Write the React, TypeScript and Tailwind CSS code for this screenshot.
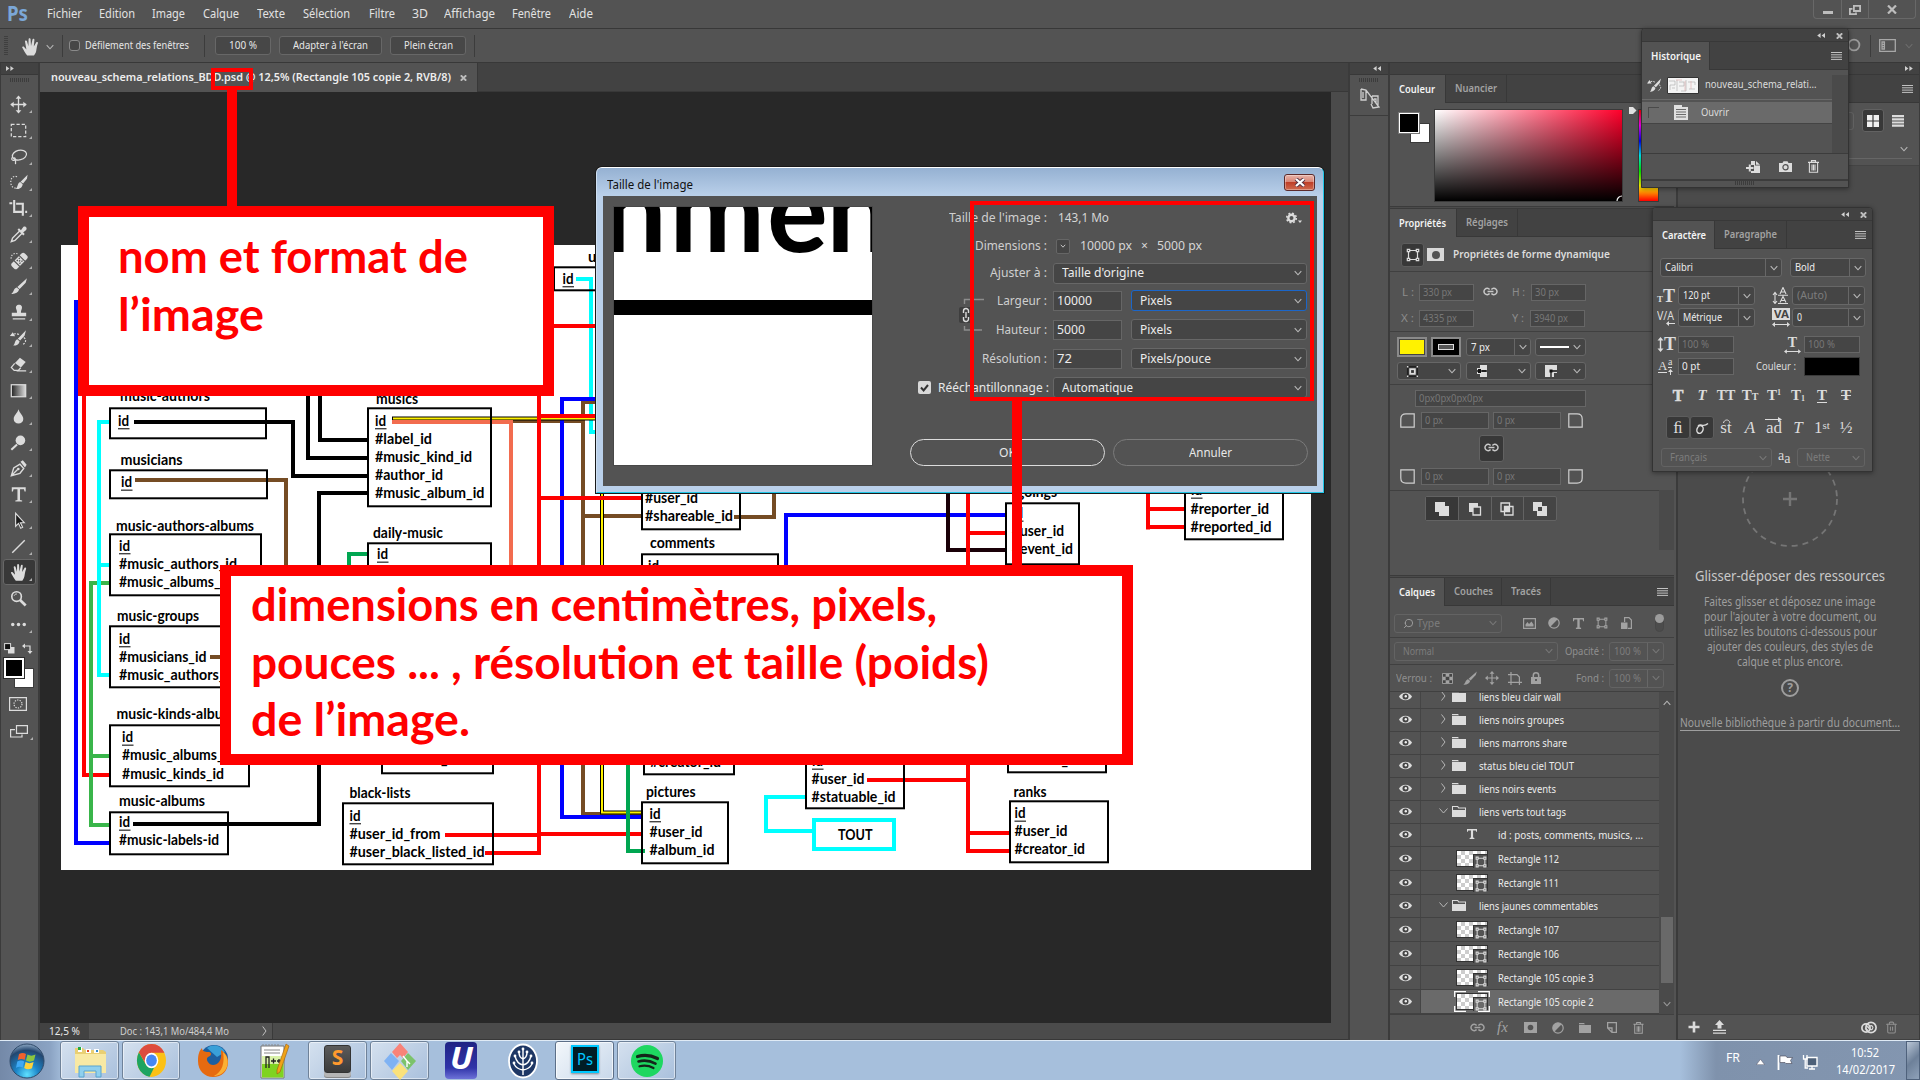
import React, { useLayoutEffect, useRef } from "react";
import { Search, Trash2 } from "lucide-react";

type Kids = { children?: React.ReactNode };

/* Text squeezed horizontally to a given width, like the narrow Adobe UI face. */
function Fit({ w, children, className = "" }: { w: number; className?: string } & Kids) {
  const ref = useRef<HTMLSpanElement>(null);
  useLayoutEffect(() => {
    const el = ref.current;
    if (!el) return;
    el.style.transform = "none";
    const n = el.getBoundingClientRect().width;
    if (n) el.style.transform = `scaleX(${w / n})`;
  }, [w, children]);
  return (
    <span className={"block shrink-0 whitespace-nowrap text-left " + className} style={{ width: w }}>
      <span ref={ref} className="inline-block origin-left whitespace-nowrap">
        {children}
      </span>
    </span>
  );
}

const Chev = ({ c = "#b4b4b4", up = false }: { c?: string; up?: boolean }) => (
  <svg className="shrink-0" width="8" height="6" viewBox="0 0 8 6" fill="none" stroke={c} strokeWidth="1.1">
    <path d={up ? "M0.7 4.8 L4 1.2 L7.3 4.8" : "M0.7 1.2 L4 4.8 L7.3 1.2"} />
  </svg>
);

const Burger = ({ className = "" }: { className?: string }) => (
  <svg className={"shrink-0 " + className} width="11" height="8" viewBox="0 0 11 8" stroke="#c2c2c2" strokeWidth="1">
    <path d="M0 .5H11M0 2.8H11M0 5.1H11M0 7.4H11" />
  </svg>
);

const Dbl = ({ right = false, className = "" }: { right?: boolean; className?: string }) => (
  <svg className={"shrink-0 " + className} width="8" height="5" viewBox="0 0 8 5" fill="#d0d0d0">
    <path d={right ? "M0 0L3.4 2.5L0 5ZM4.4 0L7.8 2.5L4.4 5Z" : "M8 0L4.6 2.5L8 5ZM3.6 0L.2 2.5L3.6 5Z"} />
  </svg>
);

const CloseX = ({ className = "" }: { className?: string }) => (
  <svg className={"shrink-0 " + className} width="7" height="6" viewBox="0 0 7 6" stroke="#bdbdbd" strokeWidth="1.9">
    <path d="M.8 .3L6.2 5.7M6.2 .3L.8 5.7" />
  </svg>
);

const Link = ({ c = "#c8c8c8" }: { c?: string }) => (
  <svg className="shrink-0" width="15" height="9" viewBox="0 0 15 9" fill="none" stroke={c} strokeWidth="1.5">
    <path d="M6.6 6.6A3.2 3.2 0 1 1 6.6 2.4M8.4 2.4A3.2 3.2 0 1 1 8.4 6.6M4.5 4.5H10.5" />
  </svg>
);

const Grip = ({ className = "" }: { className?: string }) => (
  <svg className={className} width="20" height="4" viewBox="0 0 20 4" stroke="#3c3c3c" strokeWidth="1">
    <path d="M.5 0V4M2.5 0V4M4.5 0V4M6.5 0V4M8.5 0V4M10.5 0V4M12.5 0V4M14.5 0V4M16.5 0V4M18.5 0V4" />
  </svg>
);

const Nodes = ({ c = "#dcdcdc", s = 14 }: { c?: string; s?: number }) => (
  <svg className="shrink-0" width={s} height={s} viewBox="0 0 14 14" fill="none" stroke={c} strokeWidth="1.2">
    <path d="M3.5 2.5H10.5M3.5 11.5H10.5M2.5 3.5V10.5M11.5 3.5V10.5" />
    <path d="M1.3 1.3H3.7V3.7H1.3ZM10.3 1.3H12.7V3.7H10.3ZM1.3 10.3H3.7V12.7H1.3ZM10.3 10.3H12.7V12.7H10.3Z" />
  </svg>
);

function Sel({ w, h = "h-[18px]", text, tw, div = false, dim = false, flat = false, className = "", pl = "pl-[5px]", icon }: {
  w: number; h?: string; text?: string; tw?: number; div?: boolean; dim?: boolean; flat?: boolean; className?: string; pl?: string; icon?: React.ReactNode;
}) {
  return (
    <div
      className={`flex shrink-0 items-center justify-between rounded-[3px] border ${h} ${flat ? "border-[#636363] bg-[#535353]" : "border-[#676767] bg-[#454545]"} ${className}`}
      style={{ width: w }}
    >
      <div className={`flex items-center ${pl}`}>
        {icon}
        {text && <Fit w={tw || 20} className={dim ? "text-[#7d7d7d]" : "text-[#ececec]"}>{text}</Fit>}
      </div>
      <div className={`flex h-full w-[16px] shrink-0 items-center justify-center ${div ? "border-l border-[#676767]" : ""}`}>
        <Chev c={flat ? "#777777" : "#b9b9b9"} />
      </div>
    </div>
  );
}

const Inp = ({ w, text, tw, lit = false, className = "", h = "h-[17px]" }: { w: number; text: string; tw: number; lit?: boolean; className?: string; h?: string }) => (
  <div className={`flex shrink-0 items-center border border-[#666666] bg-[#454545] pl-[3px] ${h} ${className}`} style={{ width: w }}>
    <Fit w={tw} className={lit ? "text-[#ececec]" : "text-[#777777]"}>{text}</Fit>
  </div>
);

function Tabs({ items, menu = true }: { items: [string, number, number][]; menu?: boolean }) {
  return (
    <div className="flex h-[28px] shrink-0 items-stretch bg-[#424242]">
      {items.map(([t, w, tw], i) => (
        <div
          key={t}
          className={`flex shrink-0 items-center border-r border-[#383838] pl-[9px] font-semibold ${i === 0 ? "bg-[#535353] text-[#f4f4f4]" : "border-b text-[#a3a3a3]"}`}
          style={{ width: w }}
        >
          <Fit w={tw}>{t}</Fit>
        </div>
      ))}
      <div className="flex flex-1 items-center justify-end border-b border-[#383838] pr-[6px]">{menu && <Burger />}</div>
    </div>
  );
}

/* ---------- Top bars ---------- */

const MENU: [string, number, number][] = [
  ["Fichier", 47, 35], ["Edition", 99, 36], ["Image", 152, 33], ["Calque", 203, 36], ["Texte", 257, 28], ["Sélection", 303, 47],
  ["Filtre", 369, 26], ["3D", 412, 16], ["Affichage", 444, 51], ["Fenêtre", 512, 39], ["Aide", 569, 24],
];

function MenuBar() {
  return (
    <div className="flex h-[29px] shrink-0 items-start border-b border-[#383838] bg-[#535353]">
      <div className="flex h-[27px] w-[47px] items-center pl-[7px] text-[21px] font-bold text-[#7ba7d7]">
        <Fit w={21}>Ps</Fit>
      </div>
      {MENU.map(([t, x, w], i) => (
        <div key={t} className="flex h-[28px] shrink-0 items-center text-[12.5px] text-[#e2e2e2]" style={{ width: (MENU[i + 1]?.[1] ?? x + 60) - x }}>
          <Fit w={w}>{t}</Fit>
        </div>
      ))}
      <div className="ml-auto mr-[4px] flex h-[19px] w-[103px] rounded-b-[4px] border border-t-0 border-[#686868]">
        <div className="flex w-[28px] items-center justify-center border-r border-[#686868]">
          <div className="mt-[6px] h-[3px] w-[10px] bg-[#bdbdbd]" />
        </div>
        <div className="flex w-[27px] items-center justify-center border-r border-[#686868]">
          <svg className="mt-[2px]" width="12" height="10" viewBox="0 0 12 10" fill="none" stroke="#bdbdbd" strokeWidth="1.8">
            <path d="M4.9 .9H11.1V6H4.9ZM3.5 3.9H.9V9.1H7V7.5" />
          </svg>
        </div>
        <div className="flex flex-1 items-center justify-center">
          <svg width="10" height="9" viewBox="0 0 10 9" stroke="#bdbdbd" strokeWidth="2.2"><path d="M1 .5L9 8.5M9 .5L1 8.5" /></svg>
        </div>
      </div>
    </div>
  );
}

const HandShape = () => (
  <path
    fill="#dcdcdc"
    d="M7.2 21.5C5.4 19.4 3.6 16 2.3 13.8C1.8 12.8 3.2 12 4.1 12.9L6.4 15.4L5 7.6C4.8 6.3 6.7 6 7 7.3L8.4 12.2L8.6 5.2C8.6 3.9 10.5 3.9 10.6 5.2L11 12L12.5 5.6C12.8 4.3 14.6 4.7 14.4 6L13.8 12.6L16.2 8.4C16.8 7.3 18.4 8.1 17.9 9.3C16.8 12 16.7 14.5 16.2 17C15.8 19 14.8 20.4 14 21.5Z"
  />
);

function OptionsBar() {
  const btn = "flex h-[19px] shrink-0 items-center justify-center rounded-[3px] border border-[#676767] bg-[#474747]";
  return (
    <div className="flex h-[34px] shrink-0 items-center border-b border-[#383838] bg-[#535353] text-[11px] text-[#e6e6e6]">
      <svg className="ml-[4px]" width="4" height="20" viewBox="0 0 4 20" stroke="#3f3f3f"><path d="M0 .5H4M0 2.5H4M0 4.5H4M0 6.5H4M0 8.5H4M0 10.5H4M0 12.5H4M0 14.5H4M0 16.5H4M0 18.5H4" /></svg>
      <svg className="ml-[12px]" width="21" height="24" viewBox="0 0 21 24"><HandShape /></svg>
      <div className="ml-[5px] mt-[3px]"><Chev /></div>
      <div className="ml-[8px] h-[22px] w-px bg-[#3c3c3c]" />
      <div className="ml-[6px] h-[11px] w-[11px] rounded-[3px] border border-[#8a8a8a] bg-[#464646]" />
      <Fit w={104} className="ml-[5px]">Défilement des fenêtres</Fit>
      <div className="ml-[15px] h-[22px] w-px bg-[#3c3c3c]" />
      <div className={btn + " ml-[10px] w-[56px]"}><Fit w={28}>100 %</Fit></div>
      <div className={btn + " ml-[8px] w-[103px]"}><Fit w={75}>Adapter à l'écran</Fit></div>
      <div className={btn + " ml-[8px] w-[76px]"}><Fit w={49}>Plein écran</Fit></div>
      <div className="ml-[8px] h-[22px] w-px bg-[#3c3c3c]" />
      <div className="ml-auto flex items-center">
        <svg width="16" height="16" viewBox="0 0 16 16" fill="none" stroke="#9a9a9a" strokeWidth="1.8"><circle cx="8" cy="7" r="5.4" /></svg>
        <div className="ml-[8px] h-[22px] w-px bg-[#3c3c3c]" />
        <svg className="ml-[8px]" width="17" height="13" viewBox="0 0 17 13" fill="none" stroke="#a8a8a8" strokeWidth="1.3">
          <path d="M.7 .7H16.3V12.3H.7ZM3 3H5.4V10H3ZM3 5.3H5.4M3 7.6H5.4" />
        </svg>
        <div className="ml-[9px] mr-[7px]"><Chev c="#6c6c6c" /></div>
      </div>
    </div>
  );
}

/* ---------- Toolbar ---------- */

const L = "#dcdcdc";
const TOOLS: React.ReactNode[] = [
  <g fill="none" stroke={L} strokeWidth="1.4"><path d="M12 4V20M4 12H20" /><path fill={L} stroke="none" d="M12 2.5L15 6H9ZM12 21.5L15 18H9ZM3.5 12L7 9V15ZM20.5 12L17 9V15Z" /></g>,
  <path d="M4.5 5.5H19.5V18.5H4.5Z" fill="none" stroke={L} strokeWidth="1.3" strokeDasharray="3.4 2" />,
  <g fill="none" stroke={L} strokeWidth="1.3"><ellipse cx="13" cy="10.5" rx="7.5" ry="5" transform="rotate(-14 13 10.5)" /><path d="M6 12.5C4 14 5 16.5 7.3 16C9.5 15.4 8.7 13 6.7 13.4M8.5 15.5C9.5 17 8.5 18.5 9 20" /></g>,
  <g><path d="M10.5 6C6 4.5 3.5 8 4 12.5C4.5 17 7.5 18.5 10.5 17.5" fill="none" stroke={L} strokeWidth="1.3" strokeDasharray="1.4 1.6" /><path fill={L} d="M21.5 4L20.8 8L16.8 13L14.2 11.1ZM13.8 11.6L16.4 13.8C15.7 17.7 13 19 9 18.9C11.6 17 10.6 12.8 13.8 11.6Z" /></g>,
  <path d="M7.5 3V15.5H16.5M2.5 6.5H5.5M9.5 7H16.5V19.5M19 15.5H21" fill="none" stroke={L} strokeWidth="2.2" />,
  <g><path d="M13.5 8L5.8 15.7L4.5 19.5L8.3 18.2L16 10.5" fill="none" stroke={L} strokeWidth="1.5" /><path fill={L} d="M12.5 5.5L18.5 11.5L17 13L11 7ZM14.5 7.5L17 4.2C18.8 2.6 21.6 5 20 7.2L16.8 9.8Z" /></g>,
  <g><path d="M11 5C7 3.5 3.5 6.5 4.5 11" fill="none" stroke={L} strokeWidth="1.2" strokeDasharray="1.4 1.5" /><g transform="rotate(-45 13 12.5)"><rect x="3.5" y="8.5" width="19" height="8" rx="2.5" fill={L} /><path d="M9.2 8V17M16.8 8V17" stroke="#535353" strokeWidth="1.2" /><path d="M11 10.5H12.5M14 10.5H15.5M12.3 12.5H14M11 14.5H12.5M14 14.5H15.5" stroke="#444" strokeWidth="1.2" /></g></g>,
  <path fill={L} d="M20.8 3.5L19.5 8L13.2 14.5L10.8 12.4ZM10.2 13L12.7 15.2C11.5 18.7 8.5 20 4.5 19.7C7.4 17.6 6.8 13.8 10.2 13Z" />,
  <path fill={L} d="M12.5 4C15 4 16.3 6 15.4 8.3C14.8 9.8 14.4 11 14.6 12.3H20V16H5V12.3H10.4C10.6 11 10.2 9.8 9.6 8.3C8.7 6 10 4 12.5 4ZM6 18H19V19.4H6Z" />,
  <g><path fill={L} d="M19.8 3.5L18.3 9L13.7 14.2L11.3 12.2ZM10.8 12.8L13.2 15C12.2 18.2 10 19.5 6.5 19.4C8.8 17.6 7.8 13.8 10.8 12.8Z" /><path d="M4.5 9C7 6.5 10 6.5 13 8.2M17.5 11C20.5 13 20 17 15.5 18.5" fill="none" stroke={L} strokeWidth="1.2" strokeDasharray="2 1.3" /><path fill={L} d="M3 9.5L8.5 9.7L6 5.5Z" /></g>,
  <g><path fill={L} d="M13.5 5L19.5 9.5L14.5 15.2L8.3 10.5Z" /><path d="M8 10.8L4.5 15L7.5 18.2H11.8L14.3 15.4M10 18.6H20" fill="none" stroke={L} strokeWidth="1.3" /></g>,
  <g><defs><linearGradient id="gt"><stop offset="0" stopColor="#222" /><stop offset="1" stopColor="#ddd" /></linearGradient></defs><rect x="4.5" y="6" width="15" height="12.5" fill="url(#gt)" stroke={L} strokeWidth="1.3" /></g>,
  <path fill={L} d="M12 4.5C13 8.5 17 11 17 14.5C17 17.5 14.8 19.2 12 19.2C9.2 19.2 7 17.5 7 14.5C7 11 11 8.5 12 4.5Z" />,
  <g><circle cx="14" cy="9.8" r="5" fill={L} /><path d="M10.5 14L4.5 19.5" stroke={L} strokeWidth="2.2" /></g>,
  <g><path d="M4.5 19.5L7 11.5L13.5 7.5L17.5 12L13.5 17ZM5 19L11 13" fill="none" stroke={L} strokeWidth="1.4" /><circle cx="11.8" cy="12.5" r="1.4" fill={L} /><path fill={L} d="M14 5L16.5 3.5L20.5 8L18.7 11Z" /></g>,
  <path fill={L} d="M5 4.5H19.5V8.8H18.3L17.7 6.5H13.6V17.8L15.8 18.2V19.4H8.7V18.2L10.9 17.8V6.5H6.8L6.2 8.8H5Z" />,
  <path d="M9 4.5V18L12 15L14.3 20L16.3 19L14 14.3H18Z" fill="#1c1c1c" stroke={L} strokeWidth="1.2" />,
  <path d="M5.5 18.5L18.5 5.5" stroke={L} strokeWidth="1.5" />,
  <g transform="translate(2 -1)"><HandShape /></g>,
  <g fill="none" stroke={L}><circle cx="10" cy="10" r="5" strokeWidth="1.7" /><path d="M13.6 13.6L19.5 19.3" strokeWidth="2.8" /><path d="M7.5 9C8 7.8 9 7.2 10.3 7.3" strokeWidth="1" /></g>,
  <g fill={L}><circle cx="6" cy="12" r="1.8" /><circle cx="12" cy="12" r="1.8" /><circle cx="18" cy="12" r="1.8" /></g>,
];

function Toolbar() {
  return (
    <div className="flex w-[40px] shrink-0 flex-col border-l border-r-2 border-[#3b3b3b] bg-[#535353]">
      <div className="flex h-[12px] shrink-0 items-center border-b border-[#383838] bg-[#424242] pl-[5px]"><Dbl right /></div>
      <div className="flex h-[16px] shrink-0 items-start justify-center pt-[3px]"><Grip /></div>
      {TOOLS.map((t, i) => (
        <div key={i} className={`flex h-[26px] shrink-0 items-center ${i === 18 ? "ml-[2px] mr-[2px] rounded-[3px] border border-[#676767] bg-[#383838]" : "pl-[2px]"}`}>
          <svg className={i === 18 ? "ml-[3px]" : "ml-[4px]"} width="23" height="23" viewBox="0 0 24 24">{t}</svg>
          <svg className="mt-[15px] -ml-px" width="3" height="3" viewBox="0 0 3 3"><path fill={i === 19 ? "none" : "#b0b0b0"} d="M3 0V3H0Z" /></svg>
        </div>
      ))}
      <div className="mt-[4px] flex h-[14px] items-center gap-[7px] pl-[3px]">
        <svg width="11" height="11" viewBox="0 0 11 11"><rect x="4" y="4" width="6.5" height="6.5" fill={L} /><rect x=".6" y=".6" width="6" height="6" fill="#111" stroke={L} /></svg>
        <svg width="11" height="11" viewBox="0 0 11 11" fill="none" stroke={L} strokeWidth="1.2"><path d="M2 3H8V9" /><path fill={L} stroke="none" d="M0 3L3 .5V5.5ZM8 11L5.5 8H10.5Z" /></svg>
      </div>
      <div className="relative mt-px ml-[3px] h-[34px] w-[30px] shrink-0">
        <div className="absolute left-[10px] top-[12px] h-[20px] w-[20px] border border-[#3c3c3c] bg-white" />
        <div className="absolute left-0 top-[2px] h-[20px] w-[20px] border-2 border-white bg-black outline outline-[#2b2b2b]" />
      </div>
      <svg className="mt-[7px] ml-[8px] shrink-0" width="18" height="14" viewBox="0 0 18 14" fill="none" stroke={L} strokeWidth="1.2"><path d="M.6 .6H17.4V13.4H.6Z" /><circle cx="9" cy="7" r="4" strokeDasharray="1.3 1.2" /></svg>
      <svg className="mt-[13px] ml-[9px] shrink-0" width="24" height="16" viewBox="0 0 24 16" fill="none" stroke={L} strokeWidth="1.2"><path d="M6.5 1.6H17.4V9.4H6.5ZM5 5.6H.6V13H12V10.5" /><path fill="#b0b0b0" stroke="none" d="M23 13V16H20Z" /></svg>
    </div>
  );
}

/* ---------- Document ---------- */

const BROWN = "#754c24";
const LINES: [string, string][] = [
  ["#0000ff", "M76 300V843H110"],
  ["#ff0000", "M84 390V775H110"],
  ["#39b54a", "M110 583H91V825H110M91 756H110"],
  ["#00ffff", "M110 422H99V675H110M99 565H110"],
  ["#00ffff", "M576 279H591V432H600"],
  [BROWN, "M600 402H583V814H641M583 516H641M513 421H583"],
  [BROWN, "M135 480H286V657H210"],
  [BROWN, "M734 517H774V480"],
  ["#0000ff", "M600 399H562V817H641"],
  ["#0000ff", "M786 580V515H1005"],
  ["#1a0008", "M948 480V550H1005"],
  ["#000000", "M134 422H293V476H367"],
  ["#000000", "M308 390V458H367"],
  ["#000000", "M320 390V440H367"],
  ["#000000", "M367 493H319V824H133"],
  ["#00a651", "M369 554H349V600"],
];
const TOP_LINES: [string, string][] = [
  ["#f26c4f", "M392 422H511V600"],
  ["#ff0000", "M539 390V853H485M445 835H539M539 834H641M539 416H600M539 498H641M550 326H600"],
  ["#ff0000", "M968 480V851H1009M968 533H1005M968 833H1009M867 780H968"],
  ["#ff0000", "M1148 480V529.5M1148 509H1184M1148 527H1184"],
  ["#00a651", "M628 750V851H645"],
  ["#00ffff", "M805 797H766V831H812"],
];
const BOXES: [number, number, number, number][] = [
  [110, 408, 266, 438], [110, 470, 267, 498], [110, 534, 261, 595], [110, 626, 261, 687], [110, 725, 249, 786], [110, 812, 228, 854],
  [368, 408, 491, 506], [368, 543, 491, 600], [382, 700, 493, 773], [343, 803, 493, 864], [554, 267, 640, 290],
  [642, 480, 740, 529], [642, 554, 778, 600], [1006, 503, 1079, 564], [1185, 480, 1283, 539], [644, 700, 734, 774],
  [642, 802, 728, 863], [806, 700, 904, 808], [1008, 700, 1106, 772], [1010, 801, 1108, 862],
];
const LABELS: [string, number, number, number][] = [
  ["music-authors", 120, 401, 90], ["id", 118, 425.5, 11], ["musicians", 120.5, 464.5, 62], ["id", 121, 487, 11],
  ["music-authors-albums", 116, 530.5, 138], ["id", 119, 550.5, 11], ["#music_authors_id", 119, 569, 118], ["#music_albums_id", 119, 587, 113],
  ["music-groups", 117, 621, 82], ["id", 119, 643.5, 11], ["#musicians_id", 119, 661.5, 87.5], ["#music_authors_id", 119, 679.5, 118],
  ["music-kinds-albums", 116.5, 719, 124], ["id", 122, 742, 11], ["#music_albums_id", 122, 760, 113], ["#music_kinds_id", 122, 778.5, 102],
  ["music-albums", 119, 805.5, 86], ["id", 119, 827, 11], ["#music-labels-id", 119, 845, 100],
  ["musics", 376, 403.5, 42], ["id", 375, 425.5, 11], ["#label_id", 375, 443.5, 57], ["#music_kind_id", 375, 461.5, 97], ["#author_id", 375, 479.5, 68], ["#music_album_id", 375, 497.5, 109.5],
  ["daily-music", 373, 537.5, 70], ["id", 377, 559, 11], ["#creator_id", 388, 764, 71],
  ["black-lists", 349.5, 798, 61], ["id", 349.5, 820.5, 11], ["#user_id_from", 349.5, 839, 91], ["#user_black_listed_id", 349.5, 857, 135],
  ["users", 588, 262, 35], ["id", 562.5, 283.5, 11],
  ["#user_id", 645, 502.5, 53], ["#shareable_id", 645, 520.5, 88], ["comments", 650, 547.5, 65], ["id", 648, 571, 11],
  ["goings", 1017, 496.5, 40], ["id", 1012, 518, 11], ["#user_id", 1012, 536, 52], ["#event_id", 1012, 554, 61],
  ["id", 1191, 495, 11], ["#reporter_id", 1190.5, 513.5, 78.5], ["#reported_id", 1190.5, 531.5, 81],
  ["#creator_id", 650, 767, 71], ["pictures", 646, 797, 49.5], ["id", 649.5, 818.5, 11], ["#user_id", 649.5, 837, 53], ["#album_id", 649.5, 855, 65],
  ["id", 812, 766, 11], ["#user_id", 811.5, 784, 53], ["#statuable_id", 811.5, 802, 84], ["TOUT", 838, 839.5, 34.5],
  ["#status_id", 1015.5, 765, 64], ["ranks", 1013.5, 796.5, 33], ["id", 1014.5, 818, 11], ["#user_id", 1014.5, 836, 53], ["#creator_id", 1014.5, 854, 70.5],
];

function Schema() {
  return (
    <svg className="block" width="1250" height="625" viewBox="61 245 1250 625" fill="none" fontFamily="Lato, Carlito, sans-serif">
      <rect x="61" y="245" width="1250" height="625" fill="#fff" />
      {LINES.map(([c, d], i) => <path key={i} d={d} stroke={c} strokeWidth="4" />)}
      <path d="M392 418.5H597M602 480V812.5H642" stroke="#000" strokeWidth="4" />
      <path d="M393 418.5H597M602 480V812.5H642" stroke="#fff200" strokeWidth="2" />
      {TOP_LINES.map(([c, d], i) => <path key={i} d={d} stroke={c} strokeWidth="4" />)}
      {BOXES.map(([a, b, c, d], i) => <rect key={i} x={a} y={b + 0.3} width={c - a} height={d - b} stroke="#000" strokeWidth="2" />)}
      <rect x="814" y="820" width="80" height="29" stroke="#00ffff" strokeWidth="4" />
      {LABELS.map(([t, x, y, w], i) => (
        <g key={i}>
          <text x={x} y={y} textLength={w} lengthAdjust="spacingAndGlyphs" fontSize="15" fontWeight="700" fill="#000">{t}</text>
          {t === "id" && <rect x={x} y={y + 2.5} width="11.5" height="1.4" fill="#444" />}
        </g>
      ))}
    </svg>
  );
}

function Document() {
  return (
    <div className="flex w-[1308px] shrink-0 flex-col bg-[#4b4b4b]">
      <div className="flex h-[29px] shrink-0 bg-[#424242]">
        <div className="flex w-[438px] items-center border-r border-[#383838] bg-[#535353] pl-[11px] text-[11px] font-semibold text-[#ededed]">
          <Fit w={400}>nouveau_schema_relations_BDD.psd @ 12,5% (Rectangle 105 copie 2, RVB/8)</Fit>
          <CloseX className="ml-[9px]" />
        </div>
        <div className="flex-1 border-b border-[#383838]" />
      </div>
      <div className="h-[931px] w-[1291px] shrink-0 overflow-hidden bg-[#282828] pl-[21px] pt-[153px]"><Schema /></div>
      <div className="flex h-[17px] shrink-0 items-center border-b border-[#383838] bg-[#4b4b4b] text-[11px] text-[#e8e8e8]">
        <div className="flex h-full w-[49px] items-center bg-[#424242] pl-[9px]"><Fit w={31}>12,5 %</Fit></div>
        <div className="flex h-full w-[184px] items-center border-r border-[#3a3a3a] bg-[#535353] pl-[31px] text-[#cfcfcf]">
          <Fit w={109}>Doc : 143,1 Mo/484,4 Mo</Fit>
          <svg className="ml-[33px]" width="5" height="10" viewBox="0 0 5 10" fill="none" stroke="#c0c0c0"><path d="M.7 .5L4 5L.7 9.5" /></svg>
        </div>
      </div>
    </div>
  );
}

/* ---------- Docked panels ---------- */

function ColorPanel() {
  return (
    <div className="flex h-[131px] shrink-0 flex-col">
      <Tabs items={[["Couleur", 56, 36], ["Nuancier", 61, 42]]} />
      <div className="flex pl-[9px] pt-[6px]">
        <div className="relative mt-[2px] h-[32px] w-[30px] shrink-0">
          <div className="absolute left-[11px] top-[12px] h-[20px] w-[20px] border border-[#3a3a3a] bg-white" />
          <div className="absolute left-0 top-[2px] h-[20px] w-[20px] border border-white bg-black outline outline-[#777777]" />
        </div>
        <div className="ml-[5px] h-[93px] w-[189px] overflow-hidden border border-[#3a3a3a] bg-[linear-gradient(to_right,#ffffff,#ff002b)]">
          <div className="flex h-full w-full items-end justify-end bg-[linear-gradient(to_bottom,rgba(0,0,0,0),#000000)]">
            <svg width="6" height="6" viewBox="0 0 6 6" fill="none" stroke="#eee" strokeWidth="1.2"><circle cx="6" cy="6" r="5" /></svg>
          </div>
        </div>
        <svg className="ml-[5px] -mt-[3px]" width="9" height="9" viewBox="0 0 9 9" fill="#e0e0e0"><path d="M1 1H5L8.5 4.5L5 8H1Z" /></svg>
        <div className="ml-px h-[93px] w-[21px] border border-[#3a3a3a] bg-[linear-gradient(to_bottom,#f00_0%,#f0f_17%,#00f_34%,#0ff_50%,#0f0_67%,#ff0_83%,#f00_100%)]" />
      </div>
    </div>
  );
}

const Corner = ({ rot }: { rot: number }) => (
  <svg className="shrink-0" width="15" height="15" viewBox="0 0 15 15" fill="none" stroke="#d0d0d0" strokeWidth="1.2">
    <path transform={`rotate(${rot} 7.5 7.5)`} d="M.8 14.2V6C.8 2.5 2.5 .8 6 .8H14.2V14.2Z" />
  </svg>
);

function PropertiesPanel() {
  const sec = "border-t border-[#404040]";
  return (
    <div className="flex h-[366px] shrink-0 flex-col text-[11px] text-[#8c8c8c]">
      <Tabs menu={false} items={[["Propriétés", 67, 47], ["Réglages", 61, 42]]} />
      <div className="flex h-[34px] items-center pl-[11px] pt-px">
        <div className="flex h-[24px] w-[23px] items-center justify-center rounded-[3px] border border-[#5d5d5d] bg-[#383838]"><Nodes /></div>
        <div className="ml-[3px] flex h-[13px] w-[17px] items-center justify-center bg-[#d8d8d8]"><div className="h-[8px] w-[8px] rounded-full bg-[#535353]" /></div>
        <Fit w={157} className="ml-[9px] font-semibold text-[#dcdcdc]">Propriétés de forme dynamique</Fit>
      </div>
      <div className={sec + " flex h-[60px] flex-col gap-[9px] pt-[12px]"}>
        <div className="flex items-center">
          <Fit w={12} className="ml-[12px]">L :</Fit><Inp w={55} tw={29} text="330 px" className="ml-[5px]" />
          <div className="ml-[9px] mb-[3px]"><Link /></div>
          <Fit w={13} className="ml-[14px]">H :</Fit><Inp w={55} tw={24} text="30 px" className="ml-[6px]" />
        </div>
        <div className="flex items-center">
          <Fit w={13} className="ml-[11px]">X :</Fit><Inp w={55} tw={34} text="4335 px" className="ml-[5px]" />
          <Fit w={12} className="ml-[38px]">Y :</Fit><Inp w={55} tw={34} text="3940 px" className="ml-[6px]" />
        </div>
      </div>
      <div className={sec + " flex h-[53px] flex-col gap-[5px] pl-[7px] pt-[5px]"}>
        <div className="flex items-center">
          <div className="h-[20px] w-[30px] border-2 border-[#8a8a8a] bg-[#fff200] outline outline-1 -outline-offset-3 outline-[#444]" />
          <div className="ml-[4px] flex h-[20px] w-[30px] items-center justify-center border-2 border-[#8a8a8a] bg-black"><div className="h-[6px] w-[16px] border border-[#ddd] bg-[#555]" /></div>
          <Sel w={65} text="7 px" tw={19} div className="ml-[5px]" pl="pl-[4px]" />
          <Sel w={51} className="ml-[4px]" pl="pl-[4px]" icon={<div className="h-[2px] w-[29px] bg-white" />} />
        </div>
        <div className="flex items-center">
          <Sel w={64} pl="pl-[8px]" icon={<svg width="13" height="13" viewBox="0 0 14 14" fill="none"><rect x="1.5" y="1.5" width="11" height="11" fill="#333" stroke="#1c1c1c" /><rect x="4.5" y="4.5" width="5" height="5" stroke="#ddd" strokeWidth="2" /><path d="M1 1H2.6V2.6H1ZM11.4 1H13V2.6H11.4ZM1 11.4H2.6V13H1ZM11.4 11.4H13V13H11.4Z" fill="#ddd" /></svg>} />
          <Sel w={65} className="ml-[5px]" pl="pl-[10px]" icon={<svg width="10" height="12" viewBox="0 0 10 12"><path fill="#ddd" d="M3 0H10V5H5V7H10V12H3V9H0V3H3Z" /><path d="M0 6H9" stroke="#111" strokeWidth="1.4" /><rect x="1" y="4" width="3" height="4" fill="#111" /></svg>} />
          <Sel w={51} className="ml-[4px]" pl="pl-[9px]" icon={<svg width="12" height="12" viewBox="0 0 12 12"><path fill="#ddd" d="M0 0H12V8H9V12H0Z" /><path d="M6 12V6H12" stroke="#111" fill="none" strokeWidth="1.3" /><rect x="4.5" y="4.5" width="3" height="3" fill="#111" /></svg>} />
        </div>
      </div>
      <div className={sec + " h-[106px] pt-[5px]"}>
        <Inp w={171} tw={64} text="0px0px0px0px" className="ml-[25px]" />
        <div className="mt-[5px] flex items-center pl-[10px]"><Corner rot={0} /><Inp w={68} tw={18} text="0 px" className="ml-[6px]" /><Inp w={68} tw={18} text="0 px" className="ml-[4px] mr-[7px]" /><Corner rot={90} /></div>
        <div className="ml-[89px] mt-[6px] flex h-[27px] w-[25px] items-center justify-center rounded-[3px] border border-[#626262] bg-[#383838]"><div className="mb-[2px]"><Link /></div></div>
        <div className="mt-[6px] flex items-center pl-[10px]"><Corner rot={270} /><Inp w={68} tw={18} text="0 px" className="ml-[6px]" /><Inp w={68} tw={18} text="0 px" className="ml-[4px] mr-[7px]" /><Corner rot={180} /></div>
      </div>
      <div className="flex flex-1">
        <div className={sec + " w-[269px] pl-[35px] pt-[5px]"}>
          <div className="flex h-[25px] w-[132px] divide-x divide-[#636363] rounded-[2px] border border-[#636363] bg-[#454545]">
            {[
              <path fill="#dcdcdc" d="M0 0H10V4H14V14H4V10H0Z" />,
              <g><path fill="#dcdcdc" d="M1 1H10V10H1Z" /><path fill="#454545" stroke="#dcdcdc" strokeWidth="1.3" d="M5 5H12.5V13H5Z" /></g>,
              <g stroke="#dcdcdc" strokeWidth="1.3" fill="none"><path d="M1 1H9.5V9.5H1ZM4.5 4.5H13V13H4.5Z" /><path fill="#dcdcdc" d="M5 5H9V9H5Z" /></g>,
              <path fill="#dcdcdc" fillRule="evenodd" d="M0 0H9V4H14V14H4V9H0ZM5 5H9V9H5Z" />,
            ].map((g, i) => (
              <div key={i} className={`flex flex-1 items-center justify-center ${i === 0 ? "bg-[#383838]" : ""}`}><svg width="14" height="14" viewBox="0 0 14 14">{g}</svg></div>
            ))}
          </div>
        </div>
        <div className="h-[60px] flex-1 bg-[#4a4a4a]" />
      </div>
    </div>
  );
}

const Eye = () => (
  <svg width="13" height="9" viewBox="0 0 13 9"><path fill="#dcdcdc" d="M0 4.5C2.5 -.6 10.5 -.6 13 4.5C10.5 9.6 2.5 9.6 0 4.5Z" /><circle cx="6.5" cy="4.5" r="3" fill="#444" /><circle cx="6.8" cy="4.2" r="1.2" fill="#eee" /></svg>
);

const LAYERS: { t: string; w: number; k: "f" | "o" | "t" | "r"; sel?: boolean }[] = [
  { t: "liens bleu clair wall", w: 82, k: "f" }, { t: "liens noirs groupes", w: 85, k: "f" }, { t: "liens marrons share", w: 88, k: "f" },
  { t: "status bleu ciel TOUT", w: 95, k: "f" }, { t: "liens noirs events", w: 77, k: "f" }, { t: "liens verts tout tags", w: 87, k: "o" },
  { t: "id : posts, comments, musics, ...", w: 145, k: "t" }, { t: "Rectangle 112", w: 61, k: "r" }, { t: "Rectangle 111", w: 61, k: "r" },
  { t: "liens jaunes commentables", w: 119, k: "o" }, { t: "Rectangle 107", w: 61, k: "r" }, { t: "Rectangle 106", w: 61, k: "r" },
  { t: "Rectangle 105 copie 3", w: 95.5, k: "r" }, { t: "Rectangle 105 copie 2", w: 95.5, k: "r", sel: true },
];

function LayerRow({ t, w, k, sel }: (typeof LAYERS)[number]) {
  return (
    <div className={`flex shrink-0 border-b border-[#424242] ${k === "r" ? "h-[24px]" : "h-[23px]"}`}>
      <div className="flex w-[31px] shrink-0 items-center justify-center border-r border-[#454545] pb-px"><Eye /></div>
      <div className={`flex flex-1 items-center ${sel ? "bg-[#6a6a6a]" : ""}`}>
        {(k === "f" || k === "o") && (
          <>
            <svg className="mb-[2px] ml-[18px]" width="9" height="10" viewBox="0 0 9 10" fill="none" stroke="#b8b8b8"><path d={k === "f" ? "M2.5 .5L6 5L2.5 9.5" : "M.5 2.5L4.5 7L8.5 2.5"} /></svg>
            <svg className="mb-[2px] ml-[4px]" width="14" height="11" viewBox="0 0 14 11">
              {k === "f" ? <path fill="#dcdcdc" d="M0 0H6L7 1.2H0ZM0 2H14V11H0Z" /> : <path fill="#dcdcdc" fillRule="evenodd" d="M0 0H6L7 1.5H14V11H0ZM1 1V4H13V2.6H6.4L5.4 1Z" />}
            </svg>
            <Fit w={w} className="ml-[13px] mt-px">{t}</Fit>
          </>
        )}
        {k === "t" && (
          <>
            <svg className="mb-[2px] ml-[46px]" width="10" height="10" viewBox="0 0 14 14"><path fill="#dcdcdc" d="M0 0H14V4H12.8L12.3 2H8.5V12L10.3 12.5V14H3.7V12.5L5.5 12V2H1.7L1.2 4H0Z" /></svg>
            <Fit w={w} className="ml-[21px] mt-px">{t}</Fit>
          </>
        )}
        {k === "r" && (
          <>
            <div className="relative ml-[33px] flex h-[21px] w-[36px] items-center justify-center">
              {sel && <svg className="absolute left-0 top-0" width="36" height="21" viewBox="0 0 36 21" fill="none" stroke="#fff" strokeWidth="1.3"><path d="M.7 6V.7H12M24 .7H35.3V6M35.3 15V20.3H24M12 20.3H.7V15" /></svg>}
              <div className="flex h-[17px] w-[32px] border border-[#333] bg-[repeating-conic-gradient(#ccc_0_25%,#fff_0_50%)] bg-[length:8px_8px]">
                <div className={`ml-auto mt-[3px] flex h-[14px] w-[14px] items-end justify-center ${sel ? "bg-[#6a6a6a]" : "bg-[#535353]"} border-l border-t border-[#333]`}><Nodes s={12} /></div>
              </div>
            </div>
            <Fit w={w} className="ml-[8px] mt-px">{t}</Fit>
          </>
        )}
      </div>
    </div>
  );
}

const HalfCircle = ({ s = 12 }: { s?: number }) => (
  <svg className="shrink-0" width={s} height={s} viewBox="0 0 12 12"><circle cx="6" cy="6" r="5.2" fill="none" stroke="#a2a2a2" strokeWidth="1.2" /><path d="M2.3 9.7A5.2 5.2 0 0 1 9.7 2.3Z" fill="#a2a2a2" /></svg>
);

function LayersPanel() {
  const g = "#a2a2a2";
  return (
    <div className="flex h-[462px] shrink-0 flex-col text-[11px] text-[#8f8f8f]">
      <Tabs items={[["Calques", 55, 36], ["Couches", 57, 39], ["Tracés", 49, 30]]} />
      <div className="flex h-[31px] shrink-0 items-center pl-[4px] pt-[3px]">
        <Sel flat w={108} h="h-[19px]" text="Type" tw={23} dim pl="pl-[8px]" icon={<Search className="mr-[3px] -scale-x-100" size={11} color={g} />} />
        <svg className="ml-[21px]" width="13" height="11" viewBox="0 0 13 11"><path d="M.6 .6H12.4V10.4H.6Z" fill="none" stroke={g} strokeWidth="1.2" /><path fill={g} d="M2.5 8.5V6.5L4.5 4L6 6L8.5 3.5L10.5 6.5V8.5Z" /></svg>
        <div className="ml-[12px]"><HalfCircle /></div>
        <svg className="ml-[13px]" width="11" height="11" viewBox="0 0 14 14"><path fill={g} d="M0 0H14V4H12.8L12.3 2H8.5V12L10.3 12.5V14H3.7V12.5L5.5 12V2H1.7L1.2 4H0Z" /></svg>
        <div className="ml-[12px] h-[12px]"><Nodes s={12} c={g} /></div>
        <svg className="ml-[13px]" width="11" height="12" viewBox="0 0 11 12"><path d="M3.6 5V.6H8L10.4 3V11.4H7" fill="none" stroke={g} strokeWidth="1.2" /><path fill={g} d="M0 5.5H6.5V12H0Z" /></svg>
        <div className="ml-[23px] h-[18px] w-[9px] rounded-full border border-[#474747] bg-[#4c4c4c]"><div className="-ml-px -mt-px h-[9px] w-[9px] rounded-full bg-[#9c9c9c]" /></div>
      </div>
      <div className="flex h-[27px] shrink-0 items-center border-t border-[#404040] pl-[4px]">
        <Sel flat w={164} h="h-[19px]" text="Normal" tw={31} dim pl="pl-[8px]" />
        <Fit w={39} className="ml-[7px]">Opacité :</Fit>
        <Sel flat div w={55} h="h-[19px]" text="100 %" tw={27} dim pl="pl-[4px]" className="ml-[5px]" />
      </div>
      <div className="flex h-[28px] shrink-0 items-center border-y border-[#404040] pl-[6px]">
        <Fit w={36}>Verrou :</Fit>
        <svg className="ml-[10px]" width="11" height="11" viewBox="0 0 12 12"><path d="M.5 .5H11.5V11.5H.5Z" fill="#444" stroke={g} /><path fill={g} d="M4 1H8V4H4ZM1 4H4V8H1ZM8 4H11V8H8ZM4 8H8V11H4Z" /></svg>
        <svg className="ml-[10px]" width="14" height="14" viewBox="4 3 17 17"><path fill={g} d="M20.8 3.5L19.5 8L13.2 14.5L10.8 12.4ZM10.2 13L12.7 15.2C11.5 18.7 8.5 20 4.5 19.7C7.4 17.6 6.8 13.8 10.2 13Z" /></svg>
        <svg className="ml-[8px]" width="14" height="14" viewBox="2 2 20 20"><path d="M12 4V20M4 12H20" stroke={g} strokeWidth="1.6" /><path fill={g} d="M12 2L15.5 6H8.5ZM12 22L15.5 18H8.5ZM2 12L6 8.5V15.5ZM22 12L18 8.5V15.5Z" /></svg>
        <svg className="ml-[9px]" width="14" height="13" viewBox="0 0 14 13" fill="none" stroke={g} strokeWidth="1.2"><path d="M3 0V13M0 2.6H9L11.4 5V13M0 10.4H14" /></svg>
        <svg className="ml-[9px]" width="10" height="12" viewBox="0 0 10 12"><path fill={g} d="M0 5H10V12H0Z" /><path d="M2.3 5V3.5A2.7 2.7 0 0 1 7.7 3.5V5" fill="none" stroke={g} strokeWidth="1.5" /><circle cx="5" cy="8" r="1" fill="#444" /></svg>
        <Fit w={28} className="ml-[35px]">Fond :</Fit>
        <Sel flat div w={55} h="h-[19px]" text="100 %" tw={27} dim pl="pl-[4px]" className="ml-[5px]" />
      </div>
      <div className="flex h-[322px] shrink-0 overflow-hidden">
        <div className="-mt-[6px] flex w-[269px] flex-col text-[#ececec]">
          {LAYERS.map((l) => <LayerRow key={l.t} {...l} />)}
        </div>
        <div className="flex flex-1 flex-col items-center bg-[#4a4a4a] pt-[8px]">
          <Chev up />
          <div className="mt-[211px] h-[66px] w-[12px] bg-[#696969]" />
          <div className="mt-[18px]"><Chev c="#999" /></div>
        </div>
      </div>
      <div className="flex flex-1 items-center border-t border-[#404040] pl-[80px]">
        <Link c={g} />
        <span className="ml-[12px] w-[14px] font-[Liberation_Serif] text-[15px] italic leading-none text-[#a2a2a2]">fx</span>
        <svg className="ml-[13px]" width="13" height="11" viewBox="0 0 13 11"><path fill={g} d="M0 0H13V11H0Z" /><circle cx="6.5" cy="5.5" r="2.8" fill="#535353" /></svg>
        <div className="ml-[15px]"><HalfCircle /></div>
        <svg className="ml-[15px]" width="12" height="10" viewBox="0 0 12 10"><path fill={g} d="M0 0H5L6 1.2H0ZM0 2H12V10H0Z" /></svg>
        <svg className="ml-[16px]" width="10" height="11" viewBox="0 0 10 11"><path d="M.6 6V.6H9.4V10.4H5L.6 6H5V10.4" fill="none" stroke={g} strokeWidth="1.3" /></svg>
        <svg className="ml-[16px]" width="11" height="12" viewBox="0 0 11 13" fill="none" stroke={g} strokeWidth="1.1"><path d="M0 2.4H11M3.5 2V.6H7.5V2M1.4 2.5V12.3H9.6V2.5M4 4.5V10.5M5.5 4.5V10.5M7 4.5V10.5" /></svg>
      </div>
    </div>
  );
}

function Libraries() {
  return (
    <div className="flex w-[244px] shrink-0 flex-col border-l-2 border-r border-[#3b3b3b] bg-[#4b4b4b]">
      <div className="flex h-[12px] shrink-0 items-center justify-end border-b border-[#383838] bg-[#424242] pr-[6px]"><Dbl right /></div>
      <div className="flex h-[28px] shrink-0 items-center justify-end border-b border-[#383838] bg-[#424242] pr-[6px]"><Burger /></div>
      <div className="h-[63px] shrink-0 border-b border-[#444] bg-[#535353]">
        <div className="flex items-center justify-end pt-[6px]">
          <div className="h-[18px] w-[120px] rounded-[3px] border border-[#636363]" />
          <div className="ml-[8px] flex h-[23px] w-[22px] items-center justify-center rounded-[3px] border border-[#626262] bg-[#383838]">
            <svg width="12" height="12" viewBox="0 0 12 12" fill="#f0f0f0"><path d="M0 0H5.4V5.4H0ZM6.6 0H12V5.4H6.6ZM0 6.6H5.4V12H0ZM6.6 6.6H12V12H6.6Z" /></svg>
          </div>
          <svg className="ml-[8px] mr-[15px]" width="12" height="12" viewBox="0 0 12 12" fill="#dcdcdc"><path d="M0 0H12V2.2H0ZM0 3.2H12V5.4H0ZM0 6.4H12V8.6H0ZM0 9.6H12V11.8H0Z" /></svg>
        </div>
        <div className="mr-[7px] mt-[10px] flex h-[17px] justify-end border-b border-[#666] pr-[4px] pt-[4px]"><Chev /></div>
      </div>
      <div className="flex flex-1 flex-col items-center pr-[17px] text-[12.5px] text-[#9e9e9e]">
        <svg className="mt-[284px] shrink-0" width="98" height="98" viewBox="0 0 98 98" fill="none" stroke="#757575"><circle cx="49" cy="49" r="47" strokeWidth="1.8" strokeDasharray="6 5" /><path d="M49 42V56M42 49H56" strokeWidth="2.4" /></svg>
        <Fit w={190} className="mt-[17px] text-[14px] text-[#c9c9c9]">Glisser-déposer des ressources</Fit>
        <div className="mt-[8px] flex flex-col items-center leading-[15px]">
          <Fit w={171.5}>Faites glisser et déposez une image</Fit>
          <Fit w={172.5}>pour l'ajouter à votre document, ou</Fit>
          <Fit w={173}>utilisez les boutons ci-dessous pour</Fit>
          <Fit w={166}>ajouter des couleurs, des styles de</Fit>
          <Fit w={106}>calque et plus encore.</Fit>
        </div>
        <div className="mt-[10px] flex h-[18px] w-[18px] items-center justify-center rounded-full border-2 border-[#9e9e9e] text-[12px] font-bold leading-none">?</div>
        <div className="mt-[19px] border-b border-[#9e9e9e] leading-[14px]"><Fit w={220}>Nouvelle bibliothèque à partir du document...</Fit></div>
      </div>
      <div className="flex h-[26px] shrink-0 items-center border-b border-t border-[#404040] bg-[#535353] pl-[10px]">
        <svg width="12" height="12" viewBox="0 0 12 12" stroke="#dcdcdc" strokeWidth="2.6"><path d="M6 .5V11.5M.5 6H11.5" /></svg>
        <svg className="ml-[13px]" width="13" height="14" viewBox="0 0 13 14" fill="#dcdcdc"><path d="M6.5 0L11 5H8.5V8.5H4.5V5H2ZM0 9.8H13V11H0ZM0 12.5H13V13.7H0Z" /></svg>
        <svg className="ml-[135px]" width="16" height="13" viewBox="0 0 16 13" fill="none" stroke="#dcdcdc"><circle cx="10" cy="6.5" r="5.1" strokeWidth="1.7" /><circle cx="5" cy="7" r="4.1" strokeWidth="1.7" /><path d="M4 7.5L7.5 9.5M6.8 7L9 5C11 3.8 12.8 6 11.4 8C10 9.4 8.5 8.4 7.8 7.2L5.6 5" strokeWidth="1.1" /></svg>
        <Trash2 className="ml-[8px]" size={13} color="#8f8f8f" />
      </div>
    </div>
  );
}

/* ---------- Floating panels ---------- */

function FloatHead() {
  return (
    <div className="flex h-[13px] shrink-0 items-center justify-end border-b border-[#383838] bg-[#424242] pr-[5px] pt-px">
      <Dbl /><CloseX className="ml-[11px]" />
    </div>
  );
}

function HistoryPanel() {
  return (
    <div className="absolute left-[1641px] top-[28px] flex h-[160px] w-[208px] flex-col overflow-hidden rounded-t-[4px] border border-[#333] bg-[#535353] text-[11px] text-[#dcdcdc] shadow-[0_1px_5px_rgba(0,0,0,0.4)]">
      <FloatHead />
      <Tabs items={[["Historique", 68, 50]]} />
      <div className="flex h-[84px] shrink-0 border-b border-[#3c3c3c]">
        <div className="w-[190px]">
          <div className="flex h-[30px] items-center border-b border-[#6a6a6a]">
            <svg className="ml-[5px] mt-[2px]" width="15" height="15" viewBox="3 3 18 18">{TOOLS[9]}</svg>
            <svg className="ml-[5px] mt-[2px]" width="32" height="17" viewBox="0 0 32 17"><path d="M.5 .5H31.5V16.5H.5Z" fill="#f4f4f4" stroke="#333" /><path d="M2 4H8V8H3V13M10 3V14M12 5H17V9H12M19 3V14H14M21 5H28V8M22 12H28M5 11H8" stroke="#aaa" strokeWidth=".6" fill="none" /><path d="M9 3H15M18 4V14M24 4V12" stroke="#daa" strokeWidth=".6" /></svg>
            <Fit w={111.5} className="ml-[6px]">nouveau_schema_relati...</Fit>
          </div>
          <div className="mt-[2px] flex h-[22px] items-center border-b border-[#444] bg-[#6a6a6a]">
            <div className="ml-[6px] h-[11px] w-[11px] border-l border-t border-[#4a4a4a]" />
            <svg className="ml-[15px]" width="14" height="15" viewBox="0 0 14 15"><path fill="#e0e0e0" d="M0 0H8V2H14V15H0Z" /><path d="M2 4.5H12M2 7H12M2 9.5H12M2 12H12" stroke="#6a6a6a" /></svg>
            <Fit w={28} className="mb-px ml-[13px]">Ouvrir</Fit>
          </div>
        </div>
        <div className="mt-[5px] flex-1 bg-[#4a4a4a]" />
      </div>
      <div className="flex h-[25px] shrink-0 items-center pl-[104px]">
        <svg width="14" height="12" viewBox="0 0 14 12"><path fill="#dcdcdc" d="M5 0H9V4.5H14V12H5V10H8V4H5ZM10 0L14 3.7H10Z" /><path d="M0 7H7.5M3.8 3.5V10.5" stroke="#dcdcdc" strokeWidth="2" /></svg>
        <svg className="ml-[19px]" width="13" height="11" viewBox="0 0 13 11"><path fill="#dcdcdc" d="M0 2H3.5L4.5 .3H8.5L9.5 2H13V11H0Z" /><circle cx="6.5" cy="6.2" r="2.6" fill="none" stroke="#535353" strokeWidth="1.2" /></svg>
        <svg className="ml-[16px]" width="11" height="13" viewBox="0 0 11 13" fill="none" stroke="#dcdcdc" strokeWidth="1.1"><path d="M0 2.4H11M3.5 2V.6H7.5V2M1.4 2.5V12.3H9.6V2.5M4 4.5V10.5M5.5 4.5V10.5M7 4.5V10.5" /></svg>
      </div>
      <div className="flex flex-1 justify-center border-t-2 border-[#3c3c3c]"><Grip /></div>
    </div>
  );
}

function CharacterPanel() {
  const serif = "flex w-[24px] shrink-0 items-center justify-center font-[Liberation_Serif] leading-none text-[#dcdcdc]";
  const ic = "shrink-0 whitespace-nowrap font-[Liberation_Serif] leading-none text-[#dcdcdc]";
  return (
    <div className="absolute left-[1652px] top-[207px] flex h-[265px] w-[221px] flex-col overflow-hidden rounded-t-[4px] border border-[#333] bg-[#535353] text-[11px] text-[#dcdcdc] shadow-[0_1px_5px_rgba(0,0,0,0.4)]">
      <FloatHead />
      <Tabs items={[["Caractère", 62, 44], ["Paragraphe", 72, 53]]} />
      <div className="mt-[9px] flex pl-[7px]">
        <Sel w={122} h="h-[19px]" div text="Calibri" tw={28} pl="pl-[4px]" />
        <Sel w={76} h="h-[19px]" div text="Bold" tw={20} pl="pl-[4px]" className="ml-[8px]" />
      </div>
      <div className="mt-[9px] flex items-center pl-[4px]">
        <div className={ic + " flex w-[21px] items-baseline font-bold"}><span className="text-[9px]">T</span><span className="text-[18px]">T</span></div>
        <Sel w={77} h="h-[19px]" div text="120 pt" tw={27} pl="pl-[4px]" />
        <svg className="ml-[17px]" width="17" height="17" viewBox="0 0 17 17" fill="none" stroke="#dcdcdc" strokeWidth="1.1"><path d="M3 6V16M1 8L3 5.5L5 8M1 14L3 16.5L5 14M6 8.2H16M6 16.5H16M8 7L11 .5L14 7M9 5H13M8 15.5L11 9.5L14 15.5M9 13.5H13" /></svg>
        <Sel w={73} h="h-[19px]" div text="(Auto)" tw={30} dim pl="pl-[4px]" className="ml-[3px]" />
      </div>
      <div className="mt-[3px] flex items-center pl-[4px]">
        <div className="relative h-[19px] w-[21px] shrink-0"><Fit w={17} className="text-[13px] leading-[14px]">V/A</Fit><svg className="absolute left-[9px] top-[13px]" width="9" height="5" viewBox="0 0 9 5" fill="#dcdcdc"><path d="M0 2.5L3 0V2H9V3H3V5Z" /></svg></div>
        <Sel w={77} h="h-[19px]" div text="Métrique" tw={39} pl="pl-[4px]" />
        <div className="ml-[17px] flex h-[19px] w-[18px] flex-col justify-between"><div className="flex h-[12px] justify-center bg-[#dcdcdc] text-[11px] font-bold leading-[12px] text-[#444]"><Fit w={15}>VA</Fit></div><svg width="18" height="5" viewBox="0 0 18 5" fill="#dcdcdc"><path d="M0 2.5L3 0V2H15V0L18 2.5L15 5V3H3V5Z" /></svg></div>
        <Sel w={73} h="h-[19px]" div text="0" tw={5} pl="pl-[4px]" className="ml-[2px]" />
      </div>
      <div className="mt-[8px] flex items-center pl-[4px]">
        <svg width="7" height="15" viewBox="0 0 7 15" fill="#dcdcdc"><path d="M3.5 0L6.5 3.5H4.2V11.5H6.5L3.5 15L.5 11.5H2.8V3.5H.5Z" /></svg>
        <span className={ic + " w-[14px] text-[18px] font-bold"}>T</span>
        <Inp w={56} tw={27} text="100 %" />
        <div className="ml-[50px] flex h-[17px] w-[17px] flex-col items-center"><span className={ic + " text-[14px] font-bold"}>T</span><svg className="-mt-px shrink-0" width="17" height="5" viewBox="0 0 18 5" fill="#dcdcdc"><path d="M0 2.5L3 0V2H15V0L18 2.5L15 5V3H3V5Z" /></svg></div>
        <Inp w={56} tw={27} text="100 %" className="ml-[3px]" />
      </div>
      <div className="mt-[4px] flex items-center pl-[5px]">
        <div className="relative h-[16px] w-[20px] shrink-0">
          <span className={ic + " block w-[9px] border-b border-[#dcdcdc] text-[13px]"}>A</span>
          <span className={ic + " absolute left-[10px] -top-[2px] border-b border-[#dcdcdc] text-[10px]"}>a</span>
          <svg className="absolute left-[10px] top-[10px]" width="5" height="6" viewBox="0 0 5 6" fill="#dcdcdc"><path d="M2.5 0L5 3H3V6H2V3H0Z" /></svg>
        </div>
        <Inp w={56} tw={18} text="0 pt" lit />
        <Fit w={40} className="ml-[22px]">Couleur :</Fit>
        <div className="ml-[8px] h-[19px] w-[56px] border border-[#3a3a3a] bg-black" />
      </div>
      <div className="mt-[11px] flex h-[17px] items-center pl-[13px] text-[15px] font-bold">
        <span className={serif + " text-[16px] [-webkit-text-stroke:0.6px_#dcdcdc]"}>T</span>
        <span className={serif + " italic"}>T</span>
        <span className={serif + " text-[14px]"}>TT</span>
        <span className={serif}>T<small className="mt-[3px] text-[10px]">T</small></span>
        <span className={serif}>T<small className="mb-[6px] text-[8px]">1</small></span>
        <span className={serif}>T<small className="mt-[7px] text-[8px]">1</small></span>
        <span className={serif + " underline underline-offset-2"}>T</span>
        <span className={serif + " line-through"}>T</span>
      </div>
      <div className="mt-[12px] flex h-[23px] items-center pl-[13px] text-[17px]">
        <span className={serif + " h-[23px] rounded-[3px] border border-[#5d5d5d] bg-[#383838]"}>ﬁ</span>
        <span className={serif + " h-[23px] rounded-[3px] border border-[#5d5d5d] bg-[#383838]"}>
          <svg width="14" height="12" viewBox="0 0 14 12" fill="none" stroke="#dcdcdc" strokeWidth="1.4"><ellipse cx="5" cy="7.5" rx="3" ry="4" transform="rotate(20 5 7.5)" /><path d="M3 4C6 1 8 6 13 1.5" /></svg>
        </span>
        <span className={serif}>
          <span className="relative">st<svg className="absolute left-[3px] top-0" width="8" height="4" viewBox="0 0 8 4" fill="none" stroke="#dcdcdc"><path d="M.5 4C1 .5 6 -.5 7 4" /></svg></span>
        </span>
        <span className={serif + " italic text-[#9a9a9a]"}>A</span>
        <span className={serif + " relative"}>ad<svg className="absolute left-[3px] -top-[2px]" width="17" height="5" viewBox="0 0 17 5" fill="#dcdcdc"><path d="M0 2H13V0L17 2.5L13 5V3H0Z" /></svg></span>
        <span className={serif + " italic text-[#9a9a9a]"}>T</span>
        <span className={serif}>1<small className="mb-[5px] text-[11px]">st</small></span>
        <span className={serif}>½</span>
      </div>
      <div className="mt-[9px] flex items-center pl-[8px]">
        <Sel flat w={111} h="h-[19px]" text="Français" tw={37} dim pl="pl-[8px]" />
        <span className={ic + " ml-[6px] w-[19px] text-[14px]"}><span className="relative -top-[2px]">a</span><span className="relative top-[1px]">a</span></span>
        <Sel flat w={68} h="h-[19px]" text="Nette" tw={24} dim pl="pl-[8px]" />
      </div>
    </div>
  );
}

/* ---------- Image size dialog ---------- */

const Label = ({ w, children }: { w: number; children: string }) => (
  <div className="flex w-[175px] shrink-0 justify-end text-[#cfcfcf]"><Fit w={w}>{children}</Fit></div>
);

function Dialog() {
  const row = "flex h-[29px] shrink-0 items-center";
  const unit = (t: string, w: number, focus = false) => (
    <Sel w={176} h="h-[21px]" text={t} tw={w} pl="pl-[8px]" className={"ml-[9px] " + (focus ? "border-[#1b66c9]!" : "")} />
  );
  return (
    <div className="absolute left-[596px] top-[167px] flex h-[326px] w-[728px] flex-col rounded-t-[6px] border border-t-white border-b-[#1fc7e8] border-l-[#cfe0f2] border-r-[#1fc7e8] bg-[#bad0ea] px-[6px] shadow-[0_0_0_1px_#1a1a1a]">
      <div className="-mx-[6px] flex h-[28px] shrink-0 items-center rounded-t-[5px] bg-[linear-gradient(to_bottom,#95b1d2,#bad0ea)] pl-[10px] pt-[5px] text-[12px] text-[#111]">
        <Fit w={86}>Taille de l'image</Fit>
        <div className="-mt-[4px] ml-auto mr-[8px] flex h-[17px] w-[31px] items-center justify-center rounded-[3px] border border-[#5c2a2a] bg-[linear-gradient(to_bottom,#e8b4aa,#d98676_45%,#bf3f28_50%,#cf6a4f)] shadow-[inset_0_0_0_1px_#ffffff55]">
          <svg width="12" height="9" viewBox="0 0 12 9"><path d="M2 1L10 8M10 1L2 8" stroke="#534" strokeWidth="4" /><path d="M2 1L10 8M10 1L2 8" stroke="#fff" strokeWidth="2.3" /></svg>
        </div>
      </div>
      <div className="flex h-[290px] shrink-0 bg-[#535353] text-[12px] text-[#e8e8e8]">
        <div className="relative ml-[11px] mt-[11px] h-[258px] w-[258px] shrink-0 overflow-hidden bg-white outline outline-[#484848]">
          <svg width="258" height="258" viewBox="0 0 258 258" fontFamily="Lato, sans-serif">
            <text x="-11.5 55.4 153 212.5" y="45" fontSize="114" fontWeight="700">nmen</text>
            <rect y="93" width="258" height="15" />
          </svg>
        </div>
        <div className="relative flex flex-1 flex-col pt-[7px]">
          <div className={row}><Label w={98}>Taille de l'image :</Label><Fit w={51} className="ml-[11px] text-[#d6d6d6]">143,1 Mo</Fit>
            <svg className="ml-[177px]" width="16" height="12" viewBox="0 0 16 12"><circle cx="5.5" cy="6" r="3.2" fill="none" stroke="#dcdcdc" strokeWidth="2.4" /><circle cx="5.5" cy="6" r="4.8" fill="none" stroke="#dcdcdc" strokeWidth="1.6" strokeDasharray="1.9 1.87" /><path fill="#dcdcdc" d="M12 8.5H16L14 11Z" /></svg>
          </div>
          <div className="flex h-[28px] shrink-0 items-center"><Label w={72}>Dimensions :</Label>
            <div className="ml-[9px] flex h-[15px] w-[14px] items-center justify-center rounded-[2px] border border-[#666] bg-[#454545]"><svg width="6" height="4" viewBox="0 0 8 6" fill="none" stroke="#ccc" strokeWidth="1.4"><path d="M.7 1.2L4 4.8L7.3 1.2" /></svg></div>
            <Fit w={52} className="ml-[10px] text-[#d6d6d6]">10000 px</Fit><Fit w={7} className="ml-[9px] text-[#d6d6d6]">×</Fit><Fit w={45} className="ml-[9px] text-[#d6d6d6]">5000 px</Fit>
          </div>
          <div className="flex h-[26px] shrink-0 items-center"><Label w={57}>Ajuster à :</Label><Sel w={254} h="h-[21px]" text="Taille d'origine" tw={82} pl="pl-[8px]" className="ml-[6px]" /></div>
          <div className={row}><Label w={50}>Largeur :</Label><Inp w={69} h="h-[20px]" lit tw={35} text="10000" className="ml-[6px]" />{unit("Pixels", 32, true)}</div>
          <div className={row}><Label w={51}>Hauteur :</Label><Inp w={69} h="h-[20px]" lit tw={28} text="5000" className="ml-[6px]" />{unit("Pixels", 32)}</div>
          <div className={row}><Label w={65}>Résolution :</Label><Inp w={69} h="h-[20px]" lit tw={15} text="72" className="ml-[6px]" />{unit("Pixels/pouce", 71)}</div>
          <div className={row}>
            <div className="ml-[46px] flex h-[13px] w-[13px] items-center justify-center rounded-[2px] bg-[#d8d8d8]"><svg width="9" height="8" viewBox="0 0 9 8" fill="none" stroke="#333" strokeWidth="2"><path d="M1 3.5L3.6 6.4L8 1" /></svg></div>
            <Fit w={111} className="ml-[7px]">Rééchantillonnage :</Fit>
            <Sel w={254} h="h-[21px]" text="Automatique" tw={71} pl="pl-[8px]" className="ml-[4px]" />
          </div>
          <div className="mt-[37px] flex pl-[38px]">
            <div className="flex h-[27px] w-[195px] items-center justify-center rounded-full border border-[#dcdcdc]"><Fit w={17}>OK</Fit></div>
            <div className="ml-[8px] flex h-[27px] w-[195px] items-center justify-center rounded-full border border-[#7b7b7b]"><Fit w={43}>Annuler</Fit></div>
          </div>
          <svg className="absolute left-[86px] top-[102px]" width="28" height="34" viewBox="0 0 28 34" fill="none" stroke="#8d8d8d" strokeWidth="1.4">
            <path d="M6.5 6V1.5H26M6.5 28V32H24" />
            <rect x="1" y="9" width="14" height="16" rx="2" fill="#3e3e3e" stroke="none" />
            <path d="M5.5 15V13A2.5 2.5 0 0 1 10.5 13V15M5.5 19V21A2.5 2.5 0 0 0 10.5 21V19M8 14V20" stroke="#dcdcdc" />
          </svg>
        </div>
      </div>
    </div>
  );
}

/* ---------- Annotations ---------- */

function Annotations() {
  return (
    <div className="font-[Lato] text-[46px] font-bold text-[#ff0000]">
      <div className="absolute left-[211px] top-[68px] h-[22px] w-[42px] border-4 border-[#ff0000]" />
      <div className="absolute left-[227px] top-[90px] h-[120px] w-[10px] bg-[#ff0000]" />
      <div className="absolute left-[78px] top-[206px] h-[190px] w-[476px] border-[11px] border-[#ff0000] bg-white pl-[29px] pt-[10px] leading-[58px]">
        <Fit w={350}>nom et format de</Fit>
        <Fit w={146}>l’image</Fit>
      </div>
      <div className="absolute left-[970px] top-[201px] h-[200px] w-[344px] border-4 border-[#ff0000]" />
      <div className="absolute left-[1012px] top-[400px] h-[170px] w-[10px] bg-[#ff0000]" />
      <div className="absolute left-[220px] top-[565px] h-[200px] w-[913px] border-[11px] border-[#ff0000] bg-white pl-[20px] leading-[57.5px]">
        <div className="-mt-px">
          <Fit w={686}>dimensions en centimètres, pixels,</Fit>
          <Fit w={738}>pouces ... , résolution et taille (poids)</Fit>
          <Fit w={219}>de l’image.</Fit>
        </div>
      </div>
    </div>
  );
}

/* ---------- Taskbar ---------- */

function TaskItem({ open = false, active = false, children, w = "w-[59px]" }: { open?: boolean; active?: boolean; w?: string } & Kids) {
  return (
    <div className={`flex h-[39px] shrink-0 items-center justify-center ${w} ${active ? "rounded-[3px] border border-[#5c6f88] bg-[linear-gradient(135deg,#f3f7fb,#c8d8ea)] shadow-[inset_0_0_0_1px_#ffffffaa]" : open ? "rounded-[3px] border border-[#6f8299] bg-[linear-gradient(135deg,#d5e1ef,#a9c0dc)] shadow-[inset_0_0_0_1px_#ffffff80]" : ""}`}>
      {children}
    </div>
  );
}

function Taskbar() {
  return (
    <div className="flex h-[40px] shrink-0 items-start border-t border-[#dfeaf5] bg-[linear-gradient(to_right,#7489a8_0px,#8ba3c3_50px,#a6bfdc_64px,#a6bfdc_1680px,#7f92ac_1716px,#8396b0_100%)] text-white">
      <div className="flex h-[39px] w-[60px] items-center pl-[9px]">
        <svg width="36" height="36" viewBox="0 0 36 36">
          <defs><radialGradient id="orb" cx=".5" cy=".9" r=".95"><stop offset="0" stopColor="#5fe0ff" /><stop offset=".35" stopColor="#1c86c9" /><stop offset=".75" stopColor="#23466f" /><stop offset="1" stopColor="#a9c2db" /></radialGradient></defs>
          <circle cx="18" cy="18" r="17" fill="url(#orb)" stroke="#2f4a6a" />
          <path fill="#f0622d" d="M10 11C13 9.3 15 9.8 17 11L15.6 17C13.5 15.8 11.5 15.8 8.8 17Z" />
          <path fill="#8cc63f" d="M18.5 11.5C21 13 23.5 13 26.5 11.5L25 17.5C22 19 19.5 19 17 17.6Z" />
          <path fill="#3fa9f5" d="M8.3 18.5C11 17.2 13 17.3 15.2 18.5L13.7 24.5C11.6 23.3 9.6 23.4 7 24.7Z" />
          <path fill="#fdd23c" d="M16.6 19C19 20.5 21.7 20.5 24.6 19L23 25.2C20.2 26.5 17.7 26.6 15.2 25Z" />
        </svg>
      </div>
      <TaskItem open>
        <svg width="34" height="34" viewBox="0 0 34 34"><path fill="#e9cf74" d="M2 4H10L12 6H30L33 8V29H2Z" /><path fill="#fff" d="M5 3H9V8H5ZM13 5H18V9H13ZM21 5H26V9H21Z" /><path fill="#2a4" d="M5 3H8V6H5Z" /><path fill="#d42" d="M14 6H16V8H14Z" /><path fill="#38c" d="M23 6H25V8H23Z" /><path fill="#f8e9a4" d="M2 10H33V29H2Z" /><path fill="#8fd0ee" stroke="#5aa4cf" d="M6 22H28V33H23V27H11V33H6Z" /></svg>
      </TaskItem>
      <div className="w-[3px]" />
      <TaskItem open w="w-[58px]">
        <svg width="31" height="35" viewBox="0 0 32 32" preserveAspectRatio="none"><circle cx="16" cy="16" r="15" fill="#fbc116" /><path fill="#1da462" d="M3 8.5A15 15 0 0 0 14 30.9L20 20L10 19.5Z" /><path fill="#dd4b3e" d="M3 8.5L10 19L16 9H29.3A15 15 0 0 0 3 8.5Z" /><circle cx="16" cy="16" r="7" fill="#fff" /><circle cx="16" cy="16" r="5.5" fill="#4587f3" /></svg>
      </TaskItem>
      <TaskItem w="w-[65px]">
        <svg width="32" height="36" viewBox="0 0 32 36"><circle cx="17" cy="16" r="14" fill="#1d5f9f" /><path fill="#39a0d8" d="M10 5C16 0 25 3 28 9L20 14Z" /><path fill="#e66a10" d="M1 18C1 12 2 8 5 5C5 8 8 9 11 9C14 9 15 11 13 13C10 14 9 16 11 19C13 23 19 23 22 19C25 15 24 11 24 7C30 11 31 15 31 19C31 28 25 34 16 34C8 34 1 28 1 18Z" /><path fill="#fbb034" d="M26 9C31 13 32 20 29 26C26 31 21 33 17 33C25 29 28 20 26 9Z" /></svg>
      </TaskItem>
      <TaskItem w="w-[60px]">
        <svg width="30" height="38" viewBox="0 0 30 38"><path fill="#fff" stroke="#777" d="M1 4H24V36H1Z" /><path fill="#7fd321" d="M2 20H23.5V35.5H2Z" /><path fill="#d9f2a8" d="M2 14H23V22H2Z" /><path d="M3 4V2M6 4V2M9 4V2M12 4V2M15 4V2M18 4V2M4 8H20M4 11H20" stroke="#888" /><path d="M6 26V15H9V26M11 19H16M13.5 16.5V21.5M17 19H21M19 17V21" fill="none" stroke="#222" strokeWidth="1.3" /><path fill="#f0a318" stroke="#9a5d10" strokeWidth=".6" d="M26 2L29 4L20 30L17 32L17 28Z" /></svg>
      </TaskItem>
      <div className="w-[3px]" />
      <TaskItem open w="w-[59px]">
        <div className="mb-[4px] flex h-[28px] w-[27px] items-start justify-center rounded-[3px] border border-[#333] bg-[linear-gradient(to_bottom,#5b5b5b,#3b3b3b)] text-[21px] font-bold leading-[22px] text-[#ff9a2e] shadow-[0_4px_0_#b5b5b5,0_5px_0_#888]">S</div>
      </TaskItem>
      <div className="w-[3px]" />
      <TaskItem open>
        <svg width="34" height="38" viewBox="0 0 34 38"><path fill="#f88379" d="M17 1L25 10L20 16L17 13L14 16L9 10Z" /><path fill="#7fb2f3" d="M8 11L16 19L9 28L1 19Z" /><path fill="#7cc36b" d="M25 11L33 19L25 28L18 19Z" /><path fill="#fbe27b" d="M17 21L25 29L17 38L9 29Z" /><path d="M20 14L24 19L24 25M24 19L27 22" fill="none" stroke="#fff" strokeWidth="1.4" /></svg>
      </TaskItem>
      <TaskItem w="w-[64px]">
        <div className="flex h-[37px] w-[32px] items-center justify-center rounded-[4px] bg-[linear-gradient(to_bottom,#1f2384,#3034a8_70%,#6d72d8)] text-[31px] font-bold italic leading-none"><Fit w={23} className="-mt-[6px]">U</Fit></div>
      </TaskItem>
      <TaskItem w="w-[60px]">
        <svg width="30" height="36" viewBox="0 0 30 36" fill="none" stroke="#fff"><ellipse cx="15" cy="18" rx="14" ry="16.5" fill="#1e3765" strokeWidth="1.8" /><path d="M15 32V5M15 27C9 26 7 23 6 21M15 27C21 26 23 23 24 21M15 22C10 21 8 17 7 13M15 22C20 21 22 17 23 13M15 16C12 15 11 12 11 9M15 16C18 15 19 12 19 9" strokeWidth="1.4" /><circle cx="15" cy="6" r="1.4" fill="#fff" stroke="none" /><circle cx="11" cy="9" r="1.4" fill="#fff" stroke="none" /><circle cx="19" cy="9" r="1.4" fill="#fff" stroke="none" /><circle cx="7" cy="13" r="1.4" fill="#fff" stroke="none" /><circle cx="23" cy="13" r="1.4" fill="#fff" stroke="none" /><circle cx="6" cy="20" r="1.4" fill="#fff" stroke="none" /><circle cx="24" cy="20" r="1.4" fill="#fff" stroke="none" /></svg>
      </TaskItem>
      <div className="w-[2px]" />
      <TaskItem active>
        <div className="mb-[3px] flex h-[28px] w-[28px] items-center justify-center border-2 border-[#00c8ff] bg-[#001d26] text-[16px] leading-none text-[#00c8ff] shadow-[0_1px_2px_#0006]"><Fit w={16}>Ps</Fit></div>
      </TaskItem>
      <div className="w-[3px]" />
      <TaskItem open>
        <svg width="32" height="32" viewBox="0 0 32 32" fill="none" stroke="#14251a" strokeLinecap="round"><circle cx="16" cy="16" r="16" fill="#1ed760" stroke="none" /><path d="M6.5 11.5C13 9.6 20 10.2 26.5 13.5" strokeWidth="3.2" /><path d="M7.5 16.5C13 15 19 15.6 24.5 18.6" strokeWidth="2.6" /><path d="M8.5 21.3C13 20.2 18 20.6 22.5 23" strokeWidth="2.2" /></svg>
      </TaskItem>
      <div className="ml-auto flex h-[39px] items-center">
        <Fit w={14} className="-mt-[6px] text-[13px]">FR</Fit>
        <svg className="ml-[16px] mt-[2px]" width="9" height="6" viewBox="0 0 9 6"><path fill="#fff" stroke="#556" strokeWidth=".5" d="M4.5 .3L8.7 5.7H.3Z" /></svg>
        <svg className="ml-[12px] mt-[2px]" width="16" height="16" viewBox="0 0 16 16"><path d="M1.5 1V16" stroke="#fff" strokeWidth="1.8" /><path fill="#fff" stroke="#445" strokeWidth=".6" d="M3 2H9L10 3.5H15.5L13.5 6.5L15 9.5H9L8 8.5H3Z" /></svg>
        <svg className="ml-[9px] mt-[2px]" width="16" height="16" viewBox="0 0 16 16" fill="none" stroke="#fff"><path d="M5 3.5H15V12H5Z" fill="#4d6078" strokeWidth="1.4" /><path d="M7 15H13M10 12V15M1.5 1V5H5V1M3.2 5V14H6" strokeWidth="1.3" /></svg>
        <div className="ml-[17px] flex w-[60px] flex-col items-center pt-px text-[12.5px] leading-[17px]"><Fit w={28}>10:52</Fit><Fit w={59}>14/02/2017</Fit></div>
        <div className="ml-[11px] h-[39px] w-[14px] border border-[#4f627c] bg-[linear-gradient(135deg,#b9c6d6,#6d8099_50%,#8fa2ba)]" />
      </div>
    </div>
  );
}

export default function App() {
  return (
    <div className="relative flex h-[1080px] w-[1920px] select-none flex-col overflow-hidden bg-[#535353] font-['Noto_Sans','Open_Sans',sans-serif]">
      <MenuBar />
      <OptionsBar />
      <div className="flex h-[977px] shrink-0">
        <Toolbar />
        <Document />
        <div className="flex w-[40px] shrink-0 flex-col border-l-2 border-[#3b3b3b] bg-[#535353]">
          <div className="flex h-[12px] shrink-0 items-center justify-end border-b border-[#383838] bg-[#424242] pr-[7px]"><Dbl /></div>
          <div className="flex h-[41px] flex-col items-center border-b border-[#3c3c3c] pt-[3px]">
            <Grip />
            <svg className="mt-[6px] ml-[2px]" width="21" height="21" viewBox="0 0 21 21" fill="none" stroke="#cfcfcf" strokeWidth="1.3"><path d="M1 1L6 2L19 19L13 20L11 16M1 1V12H6V8M3 4V10M6 2V8M12 8H18V17M12 8V16M14 11H16V15" /></svg>
          </div>
        </div>
        <div className="flex w-[288px] shrink-0 flex-col border-l-2 border-[#3b3b3b] bg-[#535353] pr-[2px] text-[11px]">
          <div className="-mr-[2px] h-[12px] shrink-0 border-b border-[#383838] bg-[#424242]" />
          <ColorPanel />
          <div className="h-[3px] shrink-0 border-y border-[#3b3b3b] bg-[#4b4b4b]" />
          <PropertiesPanel />
          <div className="h-[3px] shrink-0 border-y border-[#3b3b3b] bg-[#4b4b4b]" />
          <LayersPanel />
        </div>
        <Libraries />
      </div>
      <Taskbar />
      <HistoryPanel />
      <CharacterPanel />
      <Dialog />
      <Annotations />
    </div>
  );
}
